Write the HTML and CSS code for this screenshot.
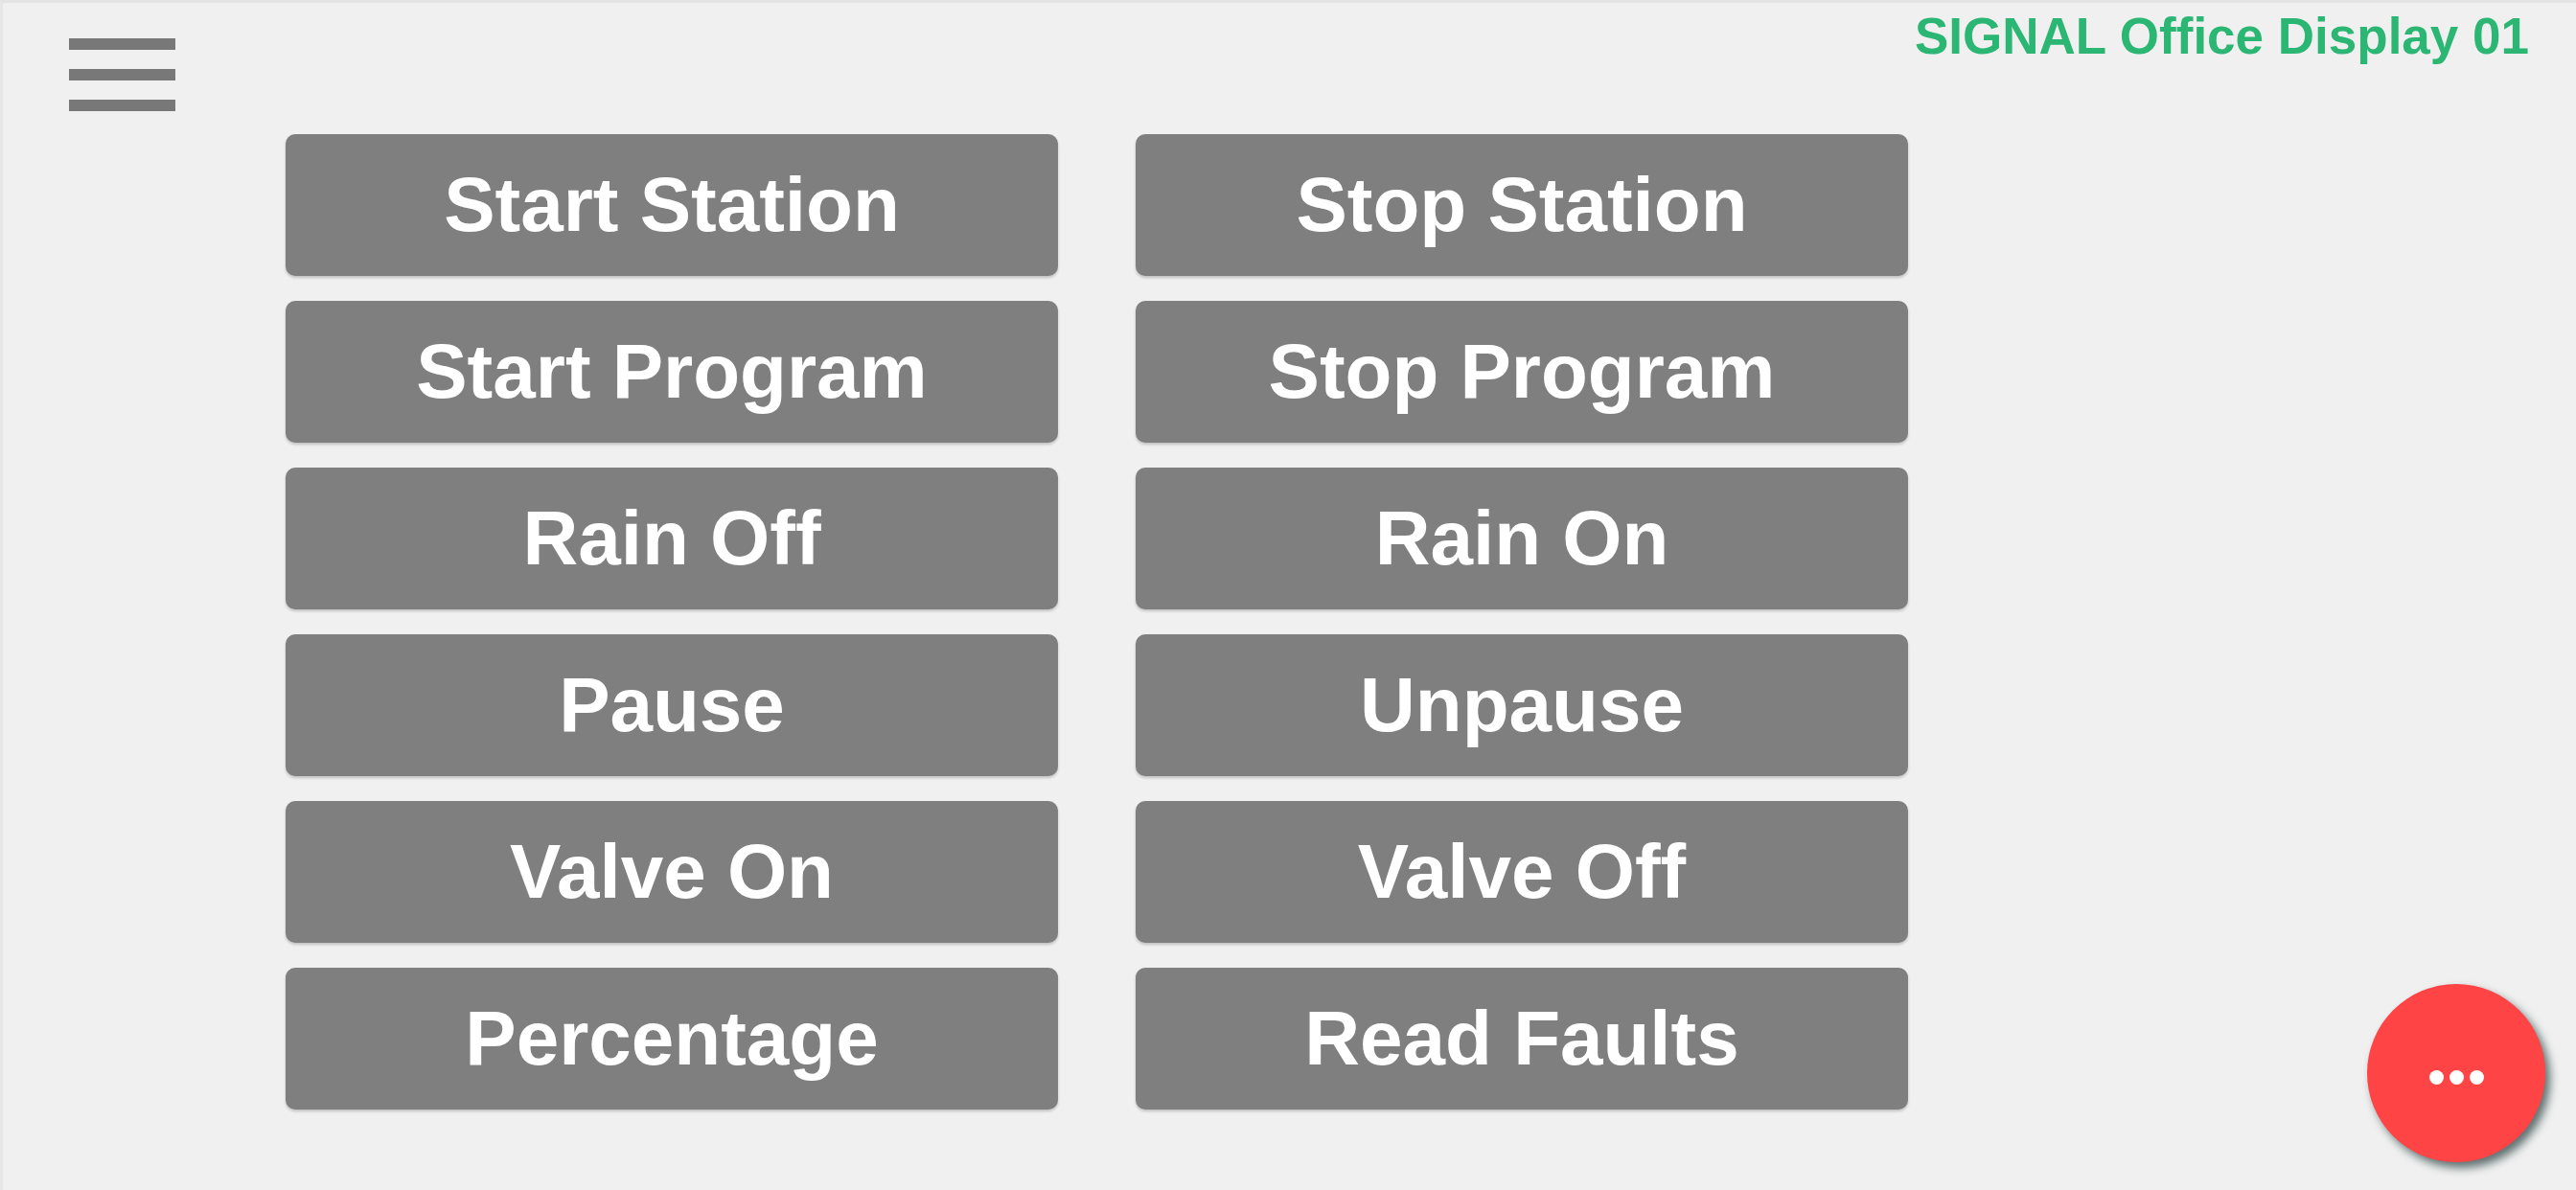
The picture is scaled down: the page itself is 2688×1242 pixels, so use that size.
FILE: index.html
```html
<!DOCTYPE html>
<html lang="en">
<head>
    <meta charset="UTF-8">
    <meta name="viewport" content="width=device-width, initial-scale=1.0">
    <title>SIGNAL Office Display 01</title>
    <link rel="stylesheet" href="styles.css">
</head>
<body>
    <div class="screen">
        <div class="top-bar">
            <button class="menu-toggle" aria-label="Menu">
                <span></span>
                <span></span>
                <span></span>
            </button>
            <div class="device-name">SIGNAL Office Display 01</div>
        </div>

        <div class="command-grid">
            <button class="cmd">Start Station</button>
            <button class="cmd">Stop Station</button>
            <button class="cmd">Start Program</button>
            <button class="cmd">Stop Program</button>
            <button class="cmd">Rain Off</button>
            <button class="cmd">Rain On</button>
            <button class="cmd">Pause</button>
            <button class="cmd">Unpause</button>
            <button class="cmd">Valve On</button>
            <button class="cmd">Valve Off</button>
            <button class="cmd">Percentage</button>
            <button class="cmd">Read Faults</button>
        </div>

        <button class="fab" aria-label="More">
            <span></span>
            <span></span>
            <span></span>
        </button>
    </div>
</body>
</html>
```

FILE: styles.css
```css
html, body {
    margin: 0;
    padding: 0;
    height: 100%;
}
body {
    font-family: "Liberation Sans", Arial, sans-serif;
    background-color: #f0f0f0;
    overflow: hidden;
}
.screen {
    position: relative;
    height: 100%;
    box-sizing: border-box;
    border-top: 3px solid #e4e4e4;
    border-left: 3px solid #e6e6e6;
}
.top-bar {
    display: flex;
    justify-content: space-between;
    align-items: flex-start;
    height: 137px;
}
.menu-toggle {
    display: flex;
    flex-direction: column;
    gap: 20px;
    margin: 37px 0 0 69px;
    padding: 0;
    border: none;
    background: none;
    cursor: pointer;
}
.menu-toggle span {
    display: block;
    width: 111px;
    height: 12px;
    background-color: #787878;
}
.device-name {
    color: #2bb673;
    font-size: 53px;
    font-weight: bold;
    padding: 4px 49px 0 0;
}
.command-grid {
    display: grid;
    grid-template-columns: 806px 806px;
    grid-auto-rows: 148px;
    column-gap: 81px;
    row-gap: 26px;
    margin-left: 295px;
}
.cmd {
    background-color: #7f7f7f;
    color: white;
    border: none;
    border-radius: 10px;
    box-shadow: 0 2px 3px rgba(0,0,0,0.2);
    font-family: "Liberation Sans", Arial, sans-serif;
    font-size: 80px;
    font-weight: bold;
    cursor: pointer;
    padding: 0;
}
.cmd:hover {
    background-color: #777;
}
.fab {
    position: absolute;
    right: 32px;
    bottom: 29px;
    width: 186px;
    height: 186px;
    border-radius: 50%;
    border: none;
    background-color: #fe4444;
    box-shadow: 5px 6px 10px rgba(20,45,45,0.65);
    display: flex;
    justify-content: center;
    align-items: center;
    gap: 6px;
    padding: 8px 0 0 0;
    cursor: pointer;
}
.fab span {
    display: block;
    width: 15px;
    height: 15px;
    border-radius: 50%;
    background-color: white;
}
```
